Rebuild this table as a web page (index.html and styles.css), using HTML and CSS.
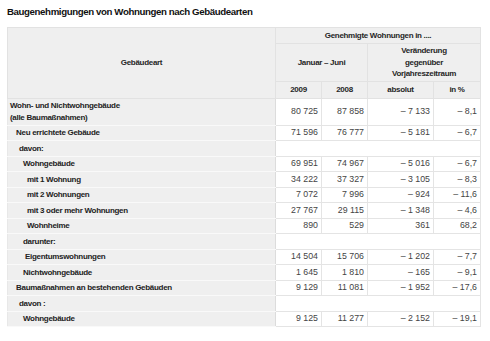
FILE: index.html
```html
<!DOCTYPE html>
<html lang="de">
<head>
<meta charset="utf-8">
<title>Baugenehmigungen</title>
<link rel="stylesheet" href="styles.css">
</head>
<body>
<h1 class="title">Baugenehmigungen von Wohnungen nach Gebäudearten</h1>
<table class="tbl">
  <colgroup>
    <col class="c-label">
    <col class="c-num">
    <col class="c-num">
    <col class="c-abs">
    <col class="c-pct">
  </colgroup>
  <thead>
    <tr>
      <th rowspan="3" class="h">Gebäudeart</th>
      <th colspan="4" class="h">Genehmigte Wohnungen in ....</th>
    </tr>
    <tr>
      <th colspan="2" class="h">Januar – Juni</th>
      <th colspan="2" class="h">Veränderung<br>gegenüber<br>Vorjahreszeitraum</th>
    </tr>
    <tr class="sub">
      <th class="h">2009</th>
      <th class="h">2008</th>
      <th class="h">absolut</th>
      <th class="h">in %</th>
    </tr>
  </thead>
  <tbody>
    <tr><th class="l0">Wohn- und Nichtwohngebäude<br>(alle Baumaßnahmen)</th><td>80 725</td><td>87 858</td><td>– 7 133</td><td>– 8,1</td></tr>
    <tr><th class="l1">Neu errichtete Gebäude</th><td>71 596</td><td>76 777</td><td>– 5 181</td><td>– 6,7</td></tr>
    <tr><th class="l2">davon:</th><td colspan="4"></td></tr>
    <tr><th class="l3">Wohngebäude</th><td>69 951</td><td>74 967</td><td>– 5 016</td><td>– 6,7</td></tr>
    <tr><th class="l4">mit 1 Wohnung</th><td>34 222</td><td>37 327</td><td>– 3 105</td><td>– 8,3</td></tr>
    <tr><th class="l4">mit 2 Wohnungen</th><td>7 072</td><td>7 996</td><td>– 924</td><td>– 11,6</td></tr>
    <tr><th class="l4">mit 3 oder mehr Wohnungen</th><td>27 767</td><td>29 115</td><td>– 1 348</td><td>– 4,6</td></tr>
    <tr><th class="l4">Wohnheime</th><td>890</td><td>529</td><td>361</td><td>68,2</td></tr>
    <tr><th class="l3">darunter:</th><td colspan="4"></td></tr>
    <tr><th class="l3b">Eigentumswohnungen</th><td>14 504</td><td>15 706</td><td>– 1 202</td><td>– 7,7</td></tr>
    <tr><th class="l3">Nichtwohngebäude</th><td>1 645</td><td>1 810</td><td>– 165</td><td>– 9,1</td></tr>
    <tr><th class="l1">Baumaßnahmen an bestehenden Gebäuden</th><td>9 129</td><td>11 081</td><td>– 1 952</td><td>– 17,6</td></tr>
    <tr><th class="l2">davon :</th><td colspan="4"></td></tr>
    <tr><th class="l3">Wohngebäude</th><td>9 125</td><td>11 277</td><td>– 2 152</td><td>– 19,1</td></tr>
  </tbody>
</table>
</body>
</html>
```
FILE: styles.css
```css
html, body {
  margin: 0;
  padding: 0;
  background: #ffffff;
}
body {
  padding: 5px 10px 0 7px;
  font-family: "Liberation Sans", Arial, sans-serif;
  color: #222;
}
.title {
  margin: 0 0 8px 0;
  font-size: 9.7px;
  font-weight: bold;
  letter-spacing: -0.4px;
  line-height: 14px;
  color: #111;
}
.tbl {
  border-collapse: collapse;
  table-layout: fixed;
  width: 473px;
  font-size: 8.8px;
}
.c-label { width: 268px; }
.c-num { width: 46px; }
.c-abs { width: 66px; }
.c-pct { width: 47px; }
.tbl th, .tbl td {
  line-height: 11.5px;
  padding: 1.5px 3px;
  border: 1px solid #e4e4e4;
}
.tbl th {
  font-size: 8px;
  letter-spacing: -0.3px;
}
.tbl th.h {
  background: #efefef;
  font-weight: bold;
  text-align: center;
  color: #262626;
  border-color: #e2e2e2;
}
.tbl tbody th {
  background: #efefef;
  font-weight: bold;
  text-align: left;
  color: #222;
  border-top-color: #f9f9f9;
  border-bottom-color: #f9f9f9;
  border-left-color: #e8e8e8;
  border-right-color: #dcdcdc;
}
.tbl td {
  background: #ffffff;
  text-align: right;
  color: #444;
}
.sub th { padding-top: 2px; padding-bottom: 2px; }
.tbl .l0 { padding-left: 2px; }
.tbl .l1 { padding-left: 8px; }
.tbl .l2 { padding-left: 11px; }
.tbl .l3 { padding-left: 15px; }
.tbl .l3b { padding-left: 17px; }
.tbl .l4 { padding-left: 19px; }
```
